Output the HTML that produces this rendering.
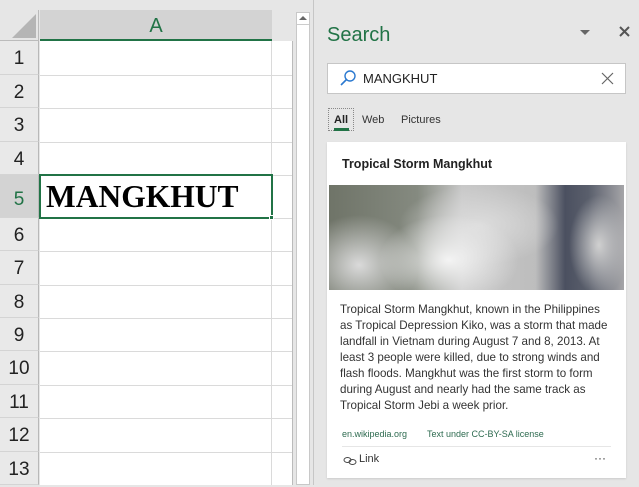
<!DOCTYPE html>
<html><head><meta charset="utf-8"><style>
*{margin:0;padding:0;box-sizing:border-box}
body{width:639px;height:485px;overflow:hidden;background:#e6e6e6;font-family:"Liberation Sans",sans-serif;position:relative}
.a{position:absolute}
.rh{position:absolute;left:0;width:39px;background:#e9e9e9;border-bottom:1px solid #d4d4d4;border-right:1px solid #b8b8b8;text-align:center;font-size:19px;color:#222;}
.hl{position:absolute;left:40px;width:252px;height:1px;background:#dadada}
.t{font-size:11.6px;color:#333;line-height:16px}
</style></head><body>
<div class="a" style="left:0;top:10px;width:39px;height:31px;background:#e6e6e6;border-right:1px solid #bbb;border-bottom:1px solid #bbb"></div>
<div class="a" style="left:12px;top:14px;width:0;height:0;border-left:24px solid transparent;border-bottom:24px solid #b5b5b5"></div>
<div class="a" style="left:40px;top:10px;width:232px;height:31px;background:#d3d3d3;border-bottom:2px solid #217346;color:#217346;font-size:20px;text-align:center;line-height:32px">A</div>
<div class="a" style="left:272px;top:10px;width:20px;height:31px;background:#e6e6e6"></div>
<div class="a" style="left:40px;top:41px;width:252px;height:444px;background:#fff"></div>
<div class="a" style="left:271px;top:41px;width:1px;height:444px;background:#dadada"></div>
<div class="a" style="left:292px;top:41px;width:1px;height:444px;background:#bbb"></div>
<div class="hl" style="top:75px"></div><div class="hl" style="top:108px"></div><div class="hl" style="top:142px"></div><div class="hl" style="top:175px"></div><div class="hl" style="top:218px"></div><div class="hl" style="top:251px"></div><div class="hl" style="top:285px"></div><div class="hl" style="top:318px"></div><div class="hl" style="top:351px"></div><div class="hl" style="top:385px"></div><div class="hl" style="top:418px"></div><div class="hl" style="top:452px"></div>
<div class="rh" style="top:41px;height:34px;line-height:36px">1</div>
<div class="rh" style="top:75px;height:33px;line-height:35px">2</div>
<div class="rh" style="top:108px;height:34px;line-height:36px">3</div>
<div class="rh" style="top:142px;height:33px;line-height:35px">4</div>
<div class="rh" style="top:175px;height:43px;line-height:50px;background:#d3d3d3;color:#217346">5</div>
<div class="rh" style="top:218px;height:33px;line-height:35px">6</div>
<div class="rh" style="top:251px;height:34px;line-height:36px">7</div>
<div class="rh" style="top:285px;height:33px;line-height:35px">8</div>
<div class="rh" style="top:318px;height:33px;line-height:35px">9</div>
<div class="rh" style="top:351px;height:34px;line-height:36px">10</div>
<div class="rh" style="top:385px;height:33px;line-height:35px">11</div>
<div class="rh" style="top:418px;height:34px;line-height:36px">12</div>
<div class="rh" style="top:452px;height:33px;line-height:35px">13</div>
<div class="a" style="left:39px;top:174px;width:234px;height:45px;border:2px solid #217346"></div>
<div class="a" style="left:269px;top:215px;width:5px;height:5px;background:#217346;border:1px solid #fff"></div>
<div class="a" style="left:46px;top:178px;font-family:'Liberation Serif',serif;font-weight:bold;font-size:31.5px;line-height:38px;color:#000">MANGKHUT</div>
<div class="a" style="left:296px;top:12px;width:14px;height:473px;background:#fff;border:1px solid #c8c8c8"></div>
<div class="a" style="left:297px;top:13px;width:12px;height:12px;border-bottom:1px solid #ccc"></div>
<div class="a" style="left:299px;top:16px;width:0;height:0;border-left:4px solid transparent;border-right:4px solid transparent;border-bottom:4px solid #666"></div>
<div class="a" style="left:313px;top:0;width:1px;height:485px;background:#c6c6c6"></div>
<div class="a" style="left:327px;top:22px;font-size:20px;color:#217346;line-height:26px">Search</div>
<div class="a" style="left:580px;top:30px;width:0;height:0;border-left:5px solid transparent;border-right:5px solid transparent;border-top:5px solid #666"></div>
<svg class="a" style="left:619px;top:26px" width="11" height="11"><path d="M1 1L10 10M10 1L1 10" stroke="#555" stroke-width="2"/></svg>
<div class="a" style="left:327px;top:63px;width:299px;height:31px;background:#fff;border:1px solid #c6c6c6"></div>
<svg class="a" style="left:339px;top:69px" width="18" height="18"><circle cx="11" cy="7" r="5" fill="none" stroke="#2b79d0" stroke-width="1.4"/><path d="M7.5 10.5L2 16" stroke="#2b79d0" stroke-width="1.6"/></svg>
<div class="a" style="left:363px;top:70px;font-size:13px;color:#222;line-height:18px">MANGKHUT</div>
<svg class="a" style="left:601px;top:72px" width="13" height="13"><path d="M1 1L12 12M12 1L1 12" stroke="#666" stroke-width="1.2"/></svg>
<div class="a" style="left:328px;top:108px;width:26px;height:23px;border:1px dotted #888"></div>
<div class="a" style="left:334px;top:114px;font-size:11px;color:#222;font-weight:bold">All</div>
<div class="a" style="left:334px;top:128px;width:15px;height:3px;background:#217346"></div>
<div class="a" style="left:362px;top:114px;font-size:11px;color:#333">Web</div>
<div class="a" style="left:401px;top:114px;font-size:11px;color:#333">Pictures</div>
<div class="a" style="left:327px;top:142px;width:299px;height:336px;background:#fff;box-shadow:0 1px 2px rgba(0,0,0,.12)"></div>
<div class="a" style="left:342px;top:157px;font-size:12.5px;font-weight:bold;color:#222">Tropical Storm Mangkhut</div>
<div class="a" style="left:329px;top:185px;width:295px;height:105px;background:
radial-gradient(ellipse 70px 45px at 120px 75px,#f4f4f4,rgba(240,240,240,0) 100%),
radial-gradient(ellipse 80px 40px at 150px 40px,#dcdcdc,rgba(220,220,220,0) 100%),
radial-gradient(ellipse 60px 50px at 30px 80px,#dadada,rgba(220,220,220,0) 100%),
radial-gradient(ellipse 30px 50px at 270px 60px,#d0d0d0,rgba(210,210,210,0) 100%),
linear-gradient(90deg,#6f7468 0%,#858a80 30%,#c8c8c8 45%,#bdbdbd 70%,#4b5060 80%,#5a5f6c 88%,#a5a5a8 100%)"></div>
<div class="a t" style="left:340px;top:302px;width:285px">Tropical Storm Mangkhut, known in the Philippines<br>as Tropical Depression Kiko, was a storm that made<br>landfall in Vietnam during August 7 and 8, 2013. At<br>least 3 people were killed, due to strong winds and<br>flash floods. Mangkhut was the first storm to form<br>during August and nearly had the same track as<br>Tropical Storm Jebi a week prior.</div>
<div class="a" style="left:342px;top:429px;font-size:9px;color:#2e6b50">en.wikipedia.org</div>
<div class="a" style="left:427px;top:429px;font-size:9px;color:#2e6b50">Text under CC-BY-SA license</div>
<div class="a" style="left:342px;top:446px;width:269px;height:1px;background:#e6e6e6"></div>
<svg class="a" style="left:343px;top:456px" width="14" height="10"><ellipse cx="4.5" cy="4" rx="3.5" ry="2.5" fill="none" stroke="#444" stroke-width="1"/><ellipse cx="9.5" cy="6" rx="3.5" ry="2.5" fill="none" stroke="#444" stroke-width="1"/></svg>
<div class="a" style="left:359px;top:453px;font-size:11px;color:#333">Link</div>
<div class="a" style="left:594px;top:451px;font-size:12px;color:#333">···</div>
</body></html>
